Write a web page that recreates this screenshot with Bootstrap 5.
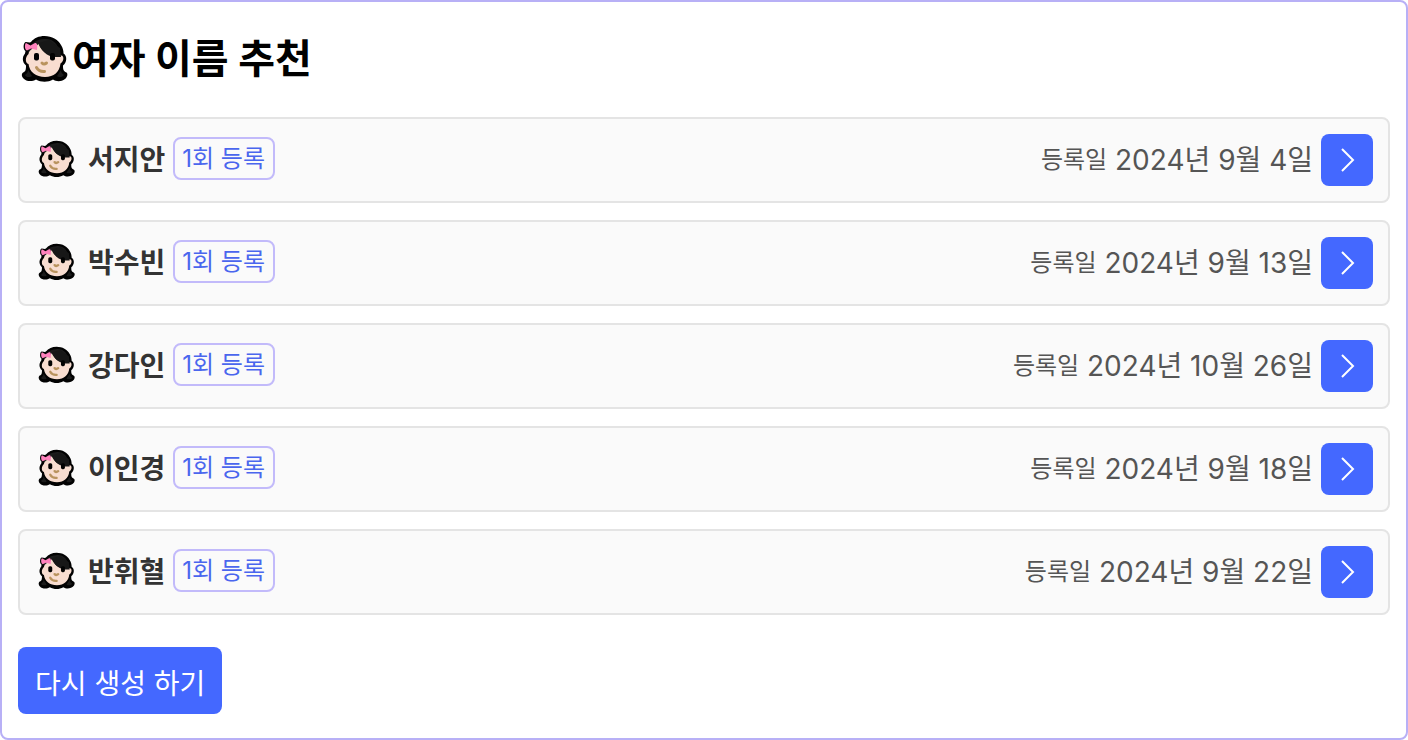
<!DOCTYPE html>
<html lang="ko">
<head>
<meta charset="utf-8">
<meta name="viewport" content="width=device-width, initial-scale=1">
<title>여자 이름 추천</title>
<link href="https://cdn.jsdelivr.net/npm/bootstrap@5.3.0/dist/css/bootstrap.min.css" rel="stylesheet">
<style>
  body { font-family: Inter, "Noto Sans CJK KR", sans-serif; background: #fff; }
  .name-panel { border: 2px solid #b8b0f6; border-radius: 8px; padding: 30px 16px 24px; min-height: 100vh; }
  .panel-title { font-size: 40px; line-height: 54px; color: #000; margin: 0 0 31px; padding-left: 3px; }
  .title-face { width: 48px; height: 48px; margin-right: 3px; }
  .name-list { gap: 17px; }
  .name-row { border: 2px solid #e4e4e4; border-radius: 8px; background: #fafafa; padding: 15px 15px 15px 18px; }
  .row-face { width: 38px; height: 38px; margin-right: 12px; margin-bottom: 3px; }
  .person { font-size: 28px; line-height: 40px; color: #333; margin-right: 8px; }
  .count-tag { font-size: 24px; line-height: 39px; color: #4a66ee; border: 2px solid #c2bafa; border-radius: 8px; padding: 0 8px 0 7px; margin-bottom: 3px; }
  .date { font-size: 28px; line-height: 40px; color: #555; margin-right: 8px; }
  .date-label { font-size: 24px; line-height: 24px; vertical-align: 2px; }
  .btn-blue { --bs-btn-bg: #4468ff; --bs-btn-color: #fff; --bs-btn-hover-bg: #3257ee; --bs-btn-hover-color: #fff; --bs-btn-border-width: 0; --bs-btn-border-radius: 8px; }
  .btn-go { width: 52px; height: 52px; padding: 0; }
  .btn-again { font-size: 28px; line-height: 43px; padding: 16px 17px 8px; margin-top: 32px; }
</style>
</head>
<body>
<svg class="d-none" aria-hidden="true">
  <symbol id="girl" viewBox="0 0 48 48">
    <path fill="#020202" d="M23.500 1C31 1 37 4.500 40 10C42 13 42.500 16 42.500 18.500C46.500 21 46 27.500 42 30.500C42 34 42 36 45.500 37.500C47 38.500 46.500 42 44 44C40 47 35 46.500 32 44.500C27 47.500 20 47.500 15 44.500C11 47 5 46.500 2.500 43.500C0 41 .5 38 3 37C5 36 5 33 5 30.500C1 27 1 22 4 18.500L4.500 16C2 15 2 8 4.500 7C7 7 9 8 10 7C13 3 18 1 23.500 1Z"/>
    <path fill="#1b1b1b" d="M23 4C32 3 38 9 39 20L29 20C23 18 20 14 18 9C15 13 11 16 7 17C9 9 15 4 23 4ZM7 35C7 38 5 39 4 40C4 42 9 43 11 41ZM40 35C40 38 42 39 43 40C42 42 38 43 36 41Z"/>
    <path fill="#f8ddd0" d="M17.500 9C20 15 25 20 33 20.500H40C43 20 43.500 26 39.500 28.500C38.500 37 33 42 24 42C15 42 8.500 37 7.500 29C4 28 4 22 7.500 19C8 14 14 13 17.500 9Z"/>
    <path fill="#171717" d="M18 8C20 16 26 21.500 34 22H40L39 13L28 5Z"/>
    <path fill="#ff82bd" d="M5 8L9.500 10.500L14 8C16.500 8 16.500 10 16 15L10 13.500L6 15.500C3.500 15 3.500 9 5 8Z"/>
    <rect x="13" y="18" width="5" height="7.500" rx="2" fill="#020202"/>
    <rect x="29" y="18" width="5" height="7.500" rx="2" fill="#020202"/>
    <path d="M21 28Q23 30 25.500 28M15.500 32.500Q18 37 23.500 36.500" fill="none" stroke="#b9935e" stroke-width="3" stroke-linecap="round"/>
  </symbol>
  <symbol id="next" viewBox="0 0 24 24">
    <path d="M7 1L18 12L7 23" fill="none" stroke="currentColor" stroke-width="2"/>
  </symbol>
</svg>
<main class="name-panel">
  <h1 class="panel-title fw-bold d-flex align-items-center"><svg class="title-face" aria-hidden="true"><use href="#girl"/></svg>여자 이름 추천</h1>
  <ul class="name-list list-unstyled d-flex flex-column mb-0">
    <li class="name-row d-flex align-items-center">
      <svg class="row-face" aria-hidden="true"><use href="#girl"/></svg><span class="person fw-bold">서지안</span><span class="count-tag">1회 등록</span>
      <span class="date ms-auto"><span class="date-label">등록일</span> 2024년 9월 4일</span>
      <button type="button" class="btn btn-blue btn-go d-flex align-items-center justify-content-center" aria-label="서지안"><svg width="24" height="24"><use href="#next"/></svg></button>
    </li>
    <li class="name-row d-flex align-items-center">
      <svg class="row-face" aria-hidden="true"><use href="#girl"/></svg><span class="person fw-bold">박수빈</span><span class="count-tag">1회 등록</span>
      <span class="date ms-auto"><span class="date-label">등록일</span> 2024년 9월 13일</span>
      <button type="button" class="btn btn-blue btn-go d-flex align-items-center justify-content-center" aria-label="박수빈"><svg width="24" height="24"><use href="#next"/></svg></button>
    </li>
    <li class="name-row d-flex align-items-center">
      <svg class="row-face" aria-hidden="true"><use href="#girl"/></svg><span class="person fw-bold">강다인</span><span class="count-tag">1회 등록</span>
      <span class="date ms-auto"><span class="date-label">등록일</span> 2024년 10월 26일</span>
      <button type="button" class="btn btn-blue btn-go d-flex align-items-center justify-content-center" aria-label="강다인"><svg width="24" height="24"><use href="#next"/></svg></button>
    </li>
    <li class="name-row d-flex align-items-center">
      <svg class="row-face" aria-hidden="true"><use href="#girl"/></svg><span class="person fw-bold">이인경</span><span class="count-tag">1회 등록</span>
      <span class="date ms-auto"><span class="date-label">등록일</span> 2024년 9월 18일</span>
      <button type="button" class="btn btn-blue btn-go d-flex align-items-center justify-content-center" aria-label="이인경"><svg width="24" height="24"><use href="#next"/></svg></button>
    </li>
    <li class="name-row d-flex align-items-center">
      <svg class="row-face" aria-hidden="true"><use href="#girl"/></svg><span class="person fw-bold">반휘혈</span><span class="count-tag">1회 등록</span>
      <span class="date ms-auto"><span class="date-label">등록일</span> 2024년 9월 22일</span>
      <button type="button" class="btn btn-blue btn-go d-flex align-items-center justify-content-center" aria-label="반휘혈"><svg width="24" height="24"><use href="#next"/></svg></button>
    </li>
  </ul>
  <button type="button" class="btn btn-blue btn-again">다시 생성 하기</button>
</main>
<script src="https://cdn.jsdelivr.net/npm/bootstrap@5.3.0/dist/js/bootstrap.bundle.min.js"></script>
</body>
</html>
